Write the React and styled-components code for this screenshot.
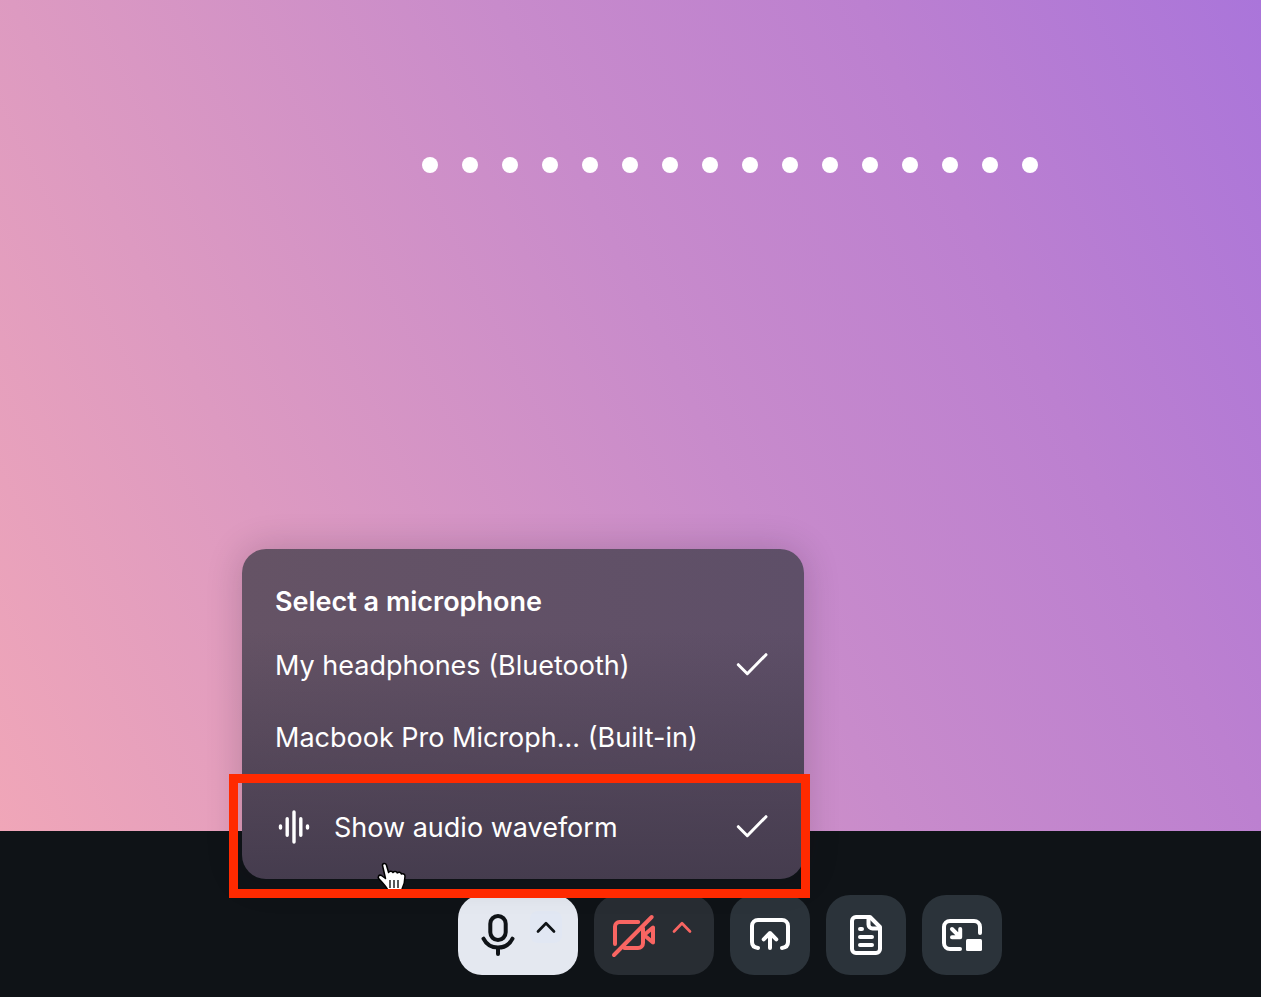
import React from "react";
import styled, { createGlobalStyle } from "styled-components";

const GlobalStyle = createGlobalStyle`
  * { box-sizing: border-box; }
  body {
    margin: 0;
    background: #0f1317;
    font-family: Inter, "Liberation Sans", sans-serif;
  }
`;

const Room = styled.div`
  display: flex;
  flex-direction: column;
  min-height: 100vh;
`;

const Stage = styled.main`
  flex: 1;
  padding: 157px 0 0 199px;
  background: linear-gradient(
    64deg,
    #f0a6b8 0%,
    #dd9ac1 25%,
    #c88bcb 54%,
    #bc80d0 76%,
    #aa75da 100%
  );
`;

const Waveform = styled.div`
  display: flex;
  justify-content: center;
  gap: 24px;
`;

const WaveDot = styled.span`
  width: 16px;
  height: 16px;
  border-radius: 50%;
  background: #fff;
`;

const Toolbar = styled.footer`
  display: flex;
  justify-content: center;
  gap: 16px;
  padding: 64px 0 22px 199px;
  background: #0f1317;
`;

const SplitControl = styled.div`
  position: relative;
  display: flex;
  height: 80px;
  border-radius: 24px;
  color: ${(p) => (p.$active ? "#0f1317" : "#f96562")};
  background: ${(p) => (p.$active ? "#e4e8f0" : "#282d33")};
`;

const BareButton = styled.button`
  display: flex;
  margin: 0;
  padding: 0;
  border: 0;
  background: none;
  color: inherit;
  font: inherit;
  cursor: pointer;
`;

const MainButton = styled(BareButton)`
  align-items: center;
  width: 72px;
  padding-left: 16px;
`;

const OptionsButton = styled(BareButton)`
  align-items: flex-start;
  width: 48px;
  padding-top: 16px;
`;

const ChevronChip = styled.span`
  display: flex;
  border-radius: 8px;
  background: ${(p) => (p.$active ? "#e1e7f3" : "transparent")};
`;

const ToolButton = styled(BareButton)`
  align-items: center;
  justify-content: center;
  width: 80px;
  height: 80px;
  border-radius: 24px;
  color: #fff;
  background: #2b333a;
`;

const Menu = styled.div`
  position: absolute;
  left: -216px;
  bottom: calc(100% + 16px);
  z-index: 1;
  width: 562px;
  padding: 25px 0 15px;
  border-radius: 24px;
  color: #fff;
  font-size: 27px;
  background:
    linear-gradient(180deg, rgba(69, 60, 78, 0) 25%, rgb(69, 60, 78) 100%),
    linear-gradient(90deg, #655365, #5e4f68);
  box-shadow: 0 0 36px rgba(20, 15, 25, 0.2);
`;

const MenuTitle = styled.h2`
  display: flex;
  align-items: center;
  height: 56px;
  margin: 0;
  padding: 0 33px 2px;
  font-size: inherit;
  font-weight: 600;
`;

const MenuItem = styled(BareButton)`
  align-items: center;
  width: 100%;
  height: 72px;
  padding: 0 32px 0 33px;
  text-align: left;
`;

const MenuLabel = styled.span`
  flex: 1;
  padding-bottom: 2px;
  white-space: nowrap;
`;

const ItemIcon = styled.span`
  display: flex;
  margin-right: 19px;
`;

const MenuFooter = styled.div`
  position: relative;
  padding-top: 18px;
`;

const Highlight = styled.div`
  position: absolute;
  inset: 0 -6px -34px -13px;
  border: 9px solid #ff2a00;
  pointer-events: none;
`;

const Pointer = styled.span`
  position: absolute;
  left: 134px;
  top: 88px;
  display: flex;
  pointer-events: none;
`;

function Icon({ width = 48, height = 48, stroke = 4, children }) {
  return (
    <svg
      width={width}
      height={height}
      viewBox={`0 0 ${width} ${height}`}
      fill="none"
      stroke="currentColor"
      strokeWidth={stroke}
      strokeLinecap="round"
      strokeLinejoin="round"
      aria-hidden="true"
    >
      {children}
    </svg>
  );
}

const MicIcon = () => (
  <Icon>
    <rect x="16.3" y="5" width="15.4" height="24" rx="7.7" />
    <path d="M9.5 27.7C12.2 33.2 17.6 36.6 24 36.6S35.8 33.2 38.5 27.7" />
    <path d="M24 37v6" />
  </Icon>
);

const CameraOffIcon = () => (
  <Icon>
    <path d="M28.2 11H9.5A4.5 4.5 0 0 0 5 15.5V33" />
    <path d="M14.5 37H28A5 5 0 0 0 33 32V17.5" />
    <path d="M34 24L43 16.5V31.5Z" />
    <path d="M4 44L41.7 6" />
  </Icon>
);

const ChevronIcon = () => (
  <Icon width={32} height={32} stroke={2.7}>
    <path d="M8 20.5L16 12.3L24 20.5" />
  </Icon>
);

const ShareIcon = () => (
  <Icon>
    <path d="M12 37C8 36.5 6 34.5 6 31V15A6 6 0 0 1 12 9H36A6 6 0 0 1 42 15V31C42 34.5 40 36.5 36 37" />
    <path d="M24 37V22.5M17.7 28.3L24 22L30.3 28.3" />
  </Icon>
);

const NotesIcon = () => (
  <Icon>
    <path d="M14 6H28L38 16V38A4 4 0 0 1 34 42H14A4 4 0 0 1 10 38V10A4 4 0 0 1 14 6Z" />
    <path d="M26.5 7V13.5A4 4 0 0 0 30.5 17.5H37" />
    <path d="M18 18H20M18 26H30M18 34H30" />
  </Icon>
);

const PipIcon = () => (
  <Icon>
    <path d="M22 38H12A6 6 0 0 1 6 32V16A6 6 0 0 1 12 10H36A6 6 0 0 1 42 16V22" />
    <path d="M14 18L21.5 25.5M22.2 18V26.2H14" />
    <rect x="28" y="28" width="16" height="12" rx="1.5" fill="currentColor" stroke="none" />
  </Icon>
);

const CheckIcon = () => (
  <Icon width={40} height={40} stroke={3}>
    <path d="M6.3 18.7L15.3 27.7L34 8.7" />
  </Icon>
);

const WaveIcon = () => (
  <Icon width={40} height={40} stroke={3.4}>
    <path d="M5.5 18V20M12.2 10.7V27.3M19 4V34M25.800 10.7V27.3M32.5 18V20" />
  </Icon>
);

const HandIcon = () => (
  <svg width="32" height="34" viewBox="0 0 32 34" aria-hidden="true">
    <path
      d="M6.5 3.5C6.2 1 9.7 .6 10.4 3L12.6 10.5C13.500 8.8 16.3 8.9 16.9 10.5C18 8.9 20.7 9.1 21.3 10.9C22.5 9.6 25 10 25.3 12C27 11.2 29 12 29 14.2C29 20 27.5 24 26 27V32H12V28C10 24.5 6 20 3.3 17.2C.9 14.7 3 12.3 5.5 13.5L9.5 16.5Z"
      fill="#fff"
      stroke="#000"
      strokeWidth="1.5"
      strokeLinejoin="round"
    />
    <path d="M14 18V26M18 18V26M22 18V26" stroke="#000" strokeWidth="1.3" />
  </svg>
);

const DOT_COUNT = 16;

export default function App() {
  return (
    <Room>
      <GlobalStyle />
      <Stage>
        <Waveform>
          {Array.from({ length: DOT_COUNT }, (_, i) => (
            <WaveDot key={i} />
          ))}
        </Waveform>
      </Stage>
      <Toolbar>
        <SplitControl $active>
          <MainButton type="button" aria-label="Microphone">
            <MicIcon />
          </MainButton>
          <OptionsButton type="button" aria-label="Microphone options" aria-expanded="true">
            <ChevronChip $active>
              <ChevronIcon />
            </ChevronChip>
          </OptionsButton>
          <Menu role="menu" aria-labelledby="mic-menu-title">
            <MenuTitle id="mic-menu-title">Select a microphone</MenuTitle>
            <MenuItem type="button" role="menuitemradio" aria-checked="true">
              <MenuLabel>My headphones (Bluetooth)</MenuLabel>
              <CheckIcon />
            </MenuItem>
            <MenuItem type="button" role="menuitemradio" aria-checked="false">
              <MenuLabel>Macbook Pro Microph... (Built-in)</MenuLabel>
            </MenuItem>
            <MenuFooter>
              <MenuItem type="button" role="menuitemcheckbox" aria-checked="true">
                <ItemIcon>
                  <WaveIcon />
                </ItemIcon>
                <MenuLabel>Show audio waveform</MenuLabel>
                <CheckIcon />
              </MenuItem>
              <Pointer>
                <HandIcon />
              </Pointer>
              <Highlight />
            </MenuFooter>
          </Menu>
        </SplitControl>
        <SplitControl>
          <MainButton type="button" aria-label="Turn on camera">
            <CameraOffIcon />
          </MainButton>
          <OptionsButton type="button" aria-label="Camera options">
            <ChevronChip>
              <ChevronIcon />
            </ChevronChip>
          </OptionsButton>
        </SplitControl>
        <ToolButton type="button" aria-label="Share screen">
          <ShareIcon />
        </ToolButton>
        <ToolButton type="button" aria-label="Notes">
          <NotesIcon />
        </ToolButton>
        <ToolButton type="button" aria-label="Picture in picture">
          <PipIcon />
        </ToolButton>
      </Toolbar>
    </Room>
  );
}
